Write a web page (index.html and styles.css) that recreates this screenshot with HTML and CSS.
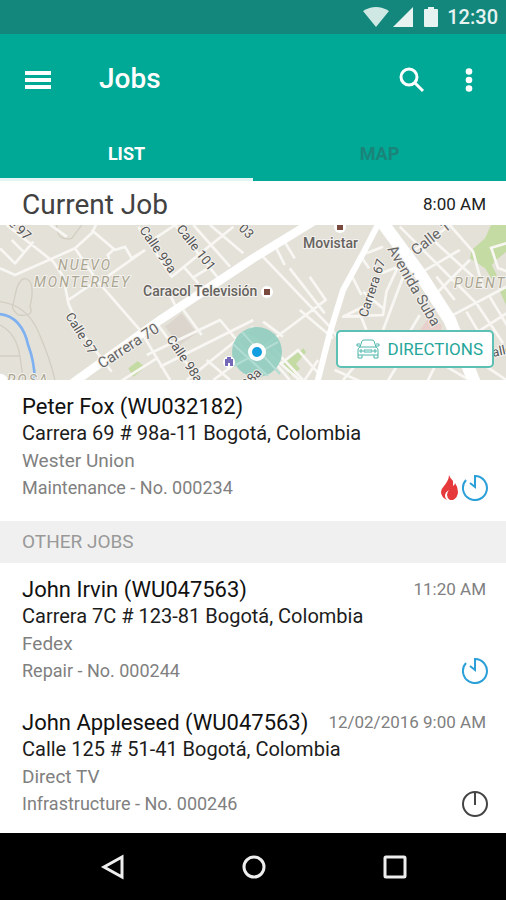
FILE: index.html
```html
<!DOCTYPE html>
<html lang="en">
<head>
    <meta charset="UTF-8">
    <meta name="viewport" content="width=device-width, initial-scale=1.0">
    <title>Jobs</title>
    <link rel="stylesheet" href="styles.css">
</head>
<body>
<div class="status-bar">
    <svg width="26" height="20" viewBox="0 0 26 20" aria-hidden="true"><path class="wifi" d="M0 4Q13-4 26 4L13 20z"/></svg>
    <svg width="20" height="20" viewBox="0 0 20 20" aria-hidden="true"><path d="M20 0v20H0z"/></svg>
    <svg class="battery" width="14" height="20" viewBox="0 0 14 20" aria-hidden="true"><path d="M4 0h6v2h3q1 0 1 1v16q0 1-1 1H1q-1 0-1-1V3q0-1 1-1h3z"/></svg>
    <span>12:30</span>
</div>

<header class="header">
    <div class="app-bar">
        <button type="button" class="icon-button" aria-label="Menu">
            <svg width="28" height="20" viewBox="0 0 28 20"><path d="M1 1h26v4H1zM1 8h26v4H1zM1 15h26v4H1z"/></svg>
        </button>
        <h1>Jobs</h1>
        <button type="button" class="icon-button" aria-label="Search">
            <svg width="26" height="26" viewBox="0 0 26 26"><circle class="line" cx="10" cy="10" r="8"/><path class="line" d="M15 15l9 9"/></svg>
        </button>
        <button type="button" class="icon-button" aria-label="More options">
            <svg width="8" height="26" viewBox="0 0 8 26"><circle cx="4" cy="4.500" r="3.300"/><circle cx="4" cy="13" r="3.300"/><circle cx="4" cy="21.500" r="3.300"/></svg>
        </button>
    </div>
    <nav class="tabs">
        <a href="#list" class="tab active">LIST</a>
        <a href="#map" class="tab">MAP</a>
    </nav>
</header>

<main id="list">
    <div class="current-heading">
        <h2>Current Job</h2>
        <time>8:00 AM</time>
    </div>

    <div class="map" id="map">
        <svg class="map-canvas" viewBox="0 0 506 155" preserveAspectRatio="xMidYMid slice">
            <g transform="translate(0 -5) scale(.3334)">
                <!-- parks and blocks -->
                <path class="park" d="M385 445l28-22 22 18-35 30zM850 430l60-45 8 12-30 35 12 15-30 20zM1475 10h50v80l-30 25-20 20 15 30-10 20-25-40-45-30 5-25 40-35zM1500 215l20-15v60z"/>
                <path class="block" d="M495 320l50-40 45 60-50 35z"/>
                <path class="block-pink" d="M1260 330l25-35 40 20-5 30z"/>
                <path class="contour" d="M0 245q80 10 115 90t50 145M0 315q50 25 60 95t10 80M50 205q15-40 35-25t5 80q15 30-35 25-25-20-15-35zM0 408h60M170 15q0 50 45 40l30-40"/>
                <path class="river" d="M-5 282q70 5 90 95 18 45 20 110"/>

                <!-- side streets, west -->
                <path class="street" d="M20 15l140 110 30 45 15 80 35 80 95 125M0 85l45 45 55-65M0 145l45 20 180-80 50-45 15-30M145 10l55 40M35 60l35 35M225 85l65 95 130 150 60 100 30 50M275 30l70 60 30-10 20 35 40-25M345 85l-22 20 5 12M310 178l125-88M205 240l85-58M415 20l100 150 185-150M525 15l130 160M580 15l110 125M630 15l100 85M465 55l60-40M550 140l45 50M575 175l65-40M510 225l20 40M550 270l55 75M440 405l220-105 100 120M480 440l280-140M470 310l135 180M360 485l110-70M560 480l200-160M690 480l-70-60M640 480l120-90"/>
                <!-- side streets, east -->
                <path class="street" transform="translate(759 0)" d="M20 100l210 220 30 40M60 65l35 70M85 50l40 65M110 145l105 135M170 170l48 70-200 150M-20 340l170 150M90 350l-60-45M140 270l100 85M60 385l90 95M85 430l50-40 70 80M0 350l110 130M155 480l40-60M320 105l28 40M295 165l30 60M340 100l50-20M385 160l50-20-35 75-10 70-120 5 90-45M330 215l60 50M320 280l20 50M490 210l-40-40-60 160M500 285l-30 50M440 20l160 160 70 70M470 100l130-90M540 60l120 110M590 15l70 80 30 110M500 160l120-70M540 230l110-110M590 290l180-95M605 240l-55-70M640 275l60 100M670 250l80 120M710 230l60 100M710 85l50-15M715 85l20 60 30 10M620 370l140-90M245 450l90 40M270 480l50-60M400 490l30-50M520 490l30-60M580 440l60 35M700 440l60 40"/>

                <!-- main avenues -->
                <path class="avenue" d="M210 495l270-195 279-185 180-110"/>
                <path class="avenue narrow" d="M1138 5l-49 95-60 110-40 130-38 150"/>
                <path class="avenue wide" d="M1145 5l114 155 90 140 75 190"/>
                <circle class="avenue-dot" cx="0" cy="485" r="24"/>
            </g>

            <circle class="range" cx="257" cy="127" r="25"/>
            <path class="range-street" d="M233 119l35 32M242 107l38 42M234 141l44-24"/>
            <circle class="pin-halo" cx="257" cy="127" r="9"/>
            <circle class="pin" cx="257" cy="127" r="5"/>
            <circle class="pin-halo" cx="229" cy="137" r="6"/>
            <path class="poi-hotel" d="M225 141v-7h2v-2h4v2h2v7h-3v-3h-2v3z"/>
            <circle class="pin-halo" cx="267" cy="67" r="6"/>
            <path class="poi" d="M264 64h6v6h-6z"/>
            <circle class="pin-halo" cx="340" cy="2" r="6"/>
            <path class="poi" d="M337 0h6v5h-6z"/>

            <g class="labels">
                <text transform="translate(3 -5) rotate(42)">lle 97</text>
                <text transform="translate(139 5) rotate(55)">Calle 99a</text>
                <text transform="translate(176 4) rotate(52)">Calle 101</text>
                <text transform="translate(238 4) rotate(45)">03</text>
                <text transform="translate(65 91) rotate(58)">Calle 97</text>
                <text transform="translate(166 114) rotate(56)">Calle 98a</text>
                <text transform="translate(367 93) rotate(-72)">Carrera 67</text>
                <text transform="translate(247 164) rotate(-45)">98a</text>
                <text transform="translate(493 132) rotate(-12)">alle</text>
            </g>
            <g class="labels large">
                <text transform="translate(102 144) rotate(-33)">Carrera 70</text>
                <text transform="translate(387 24) rotate(60)">Avenida Suba</text>
                <text transform="translate(416 31) rotate(-38)">Calle 1</text>
            </g>
            <g class="labels place">
                <text x="143" y="71">Caracol Televisión</text>
                <text x="303" y="23">Movistar</text>
            </g>
            <g class="labels district">
                <text x="58" y="45">NUEVO</text>
                <text x="34" y="62">MONTERREY</text>
                <text x="454" y="63">PUENTE</text>
                <text x="7" y="160">ROSA</text>
            </g>
        </svg>
        <button type="button" class="directions">
            <svg width="24" height="20" viewBox="0 0 24 20" aria-hidden="true"><path d="M4 8l2-6q.5-1 2-1h8q1.500 0 2 1l2 6M4 8h16q2 1 2 3v5H2v-5q0-2 2-3zM4 7H1v-2h3M20 7h3v-2h-3M2 16v3h4v-3M18 16v3h4v-3M8 11h8v2H8zM4 11h2v2H4zM18 11h2v2h-2z"/></svg>
            DIRECTIONS
        </button>
    </div>

    <article class="job current">
        <h3>Peter Fox (WU032182)</h3>
        <p class="address">Carrera 69 # 98a-11 Bogotá, Colombia</p>
        <p class="client">Wester Union</p>
        <p class="work">Maintenance - No. 000234</p>
        <div class="flags">
            <svg width="17" height="25" viewBox="0 0 17 25" role="img" aria-label="Urgent"><path class="flame" d="M8 0q1 3 4 6 0 3 0 5 2-1 2-3 3 4 3 9 0 5-5 8H9q-3-2-3-5 0-3 2-5-4 2-4 6 0 2 2 4-6-3-6-8 0-3 3-6Q8 5 8 0z"/></svg>
            <svg class="clock started" width="26" height="26" viewBox="0 0 26 26" role="img" aria-label="In progress"><path d="M4 5a12 12 0 1 0 9-4v11l-5-4"/></svg>
        </div>
    </article>

    <h2 class="section-title">OTHER JOBS</h2>

    <article class="job">
        <h3>John Irvin (WU047563)</h3>
        <time>11:20 AM</time>
        <p class="address">Carrera 7C # 123-81 Bogotá, Colombia</p>
        <p class="client">Fedex</p>
        <p class="work">Repair - No. 000244</p>
        <div class="flags">
            <svg class="clock started" width="26" height="26" viewBox="0 0 26 26" role="img" aria-label="In progress"><path d="M4 5a12 12 0 1 0 9-4v11l-5-4"/></svg>
        </div>
    </article>

    <article class="job">
        <h3>John Appleseed (WU047563)</h3>
        <time>12/02/2016 9:00 AM</time>
        <p class="address">Calle 125 # 51-41 Bogotá, Colombia</p>
        <p class="client">Direct TV</p>
        <p class="work">Infrastructure - No. 000246</p>
        <div class="flags">
            <svg class="clock" width="26" height="26" viewBox="0 0 26 26" role="img" aria-label="Not started"><circle cx="13" cy="13" r="12"/><path d="M13 1v13"/></svg>
        </div>
    </article>
</main>

<footer class="nav-bar">
    <button type="button" class="icon-button" aria-label="Back">
        <svg width="26" height="26" viewBox="0 0 26 26"><path d="M22 3v20L4 13z"/></svg>
    </button>
    <button type="button" class="icon-button" aria-label="Home">
        <svg width="26" height="26" viewBox="0 0 26 26"><circle cx="13" cy="13" r="10"/></svg>
    </button>
    <button type="button" class="icon-button" aria-label="Recent apps">
        <svg width="26" height="26" viewBox="0 0 26 26"><rect x="3" y="3" width="20" height="20" rx="1"/></svg>
    </button>
</footer>
</body>
</html>
```
FILE: styles.css
```css
/* General page styling */
* {
    box-sizing: border-box;
}

body {
    font-family: Roboto, sans-serif;
    margin: 0;
    min-height: 100vh;
    display: flex;
    flex-direction: column;
    background-color: white;
    color: #212121;
}

h1, h2, h3, p {
    margin: 0;
    font-weight: normal;
}

svg {
    display: block;
}

.icon-button {
    display: flex;
    padding: 0;
    border: none;
    background: none;
    cursor: pointer;
}

/* Status bar */
.status-bar {
    display: flex;
    align-items: center;
    justify-content: flex-end;
    gap: 4px;
    height: 34px;
    padding: 0 8px;
    background-color: #14877d;
    color: #e6f3f1;
    font-size: 20px;
    font-weight: 500;
}

.status-bar svg {
    fill: #e6f3f1;
}

.status-bar .wifi {
    fill: #cfe8e4;
}

.status-bar .battery {
    margin: 0 5px 0 7px;
}

/* Header */
.header {
    background-color: #00a896;
    color: white;
}

.app-bar {
    display: flex;
    align-items: center;
    height: 92px;
    padding: 0 33px 0 24px;
}

.app-bar svg {
    fill: white;
}

.app-bar .line {
    fill: none;
    stroke: white;
    stroke-width: 3;
}

.app-bar .icon-button + .icon-button {
    margin-left: 40px;
}

h1 {
    flex: 1;
    margin-left: 47px;
    padding-bottom: 4px;
    font-size: 28px;
    font-weight: 500;
}

.tabs {
    display: flex;
}

.tab {
    flex: 1;
    height: 55px;
    border-bottom: 3px solid transparent;
    color: #1a8479;
    font-size: 18px;
    font-weight: 700;
    line-height: 56px;
    text-align: center;
    text-decoration: none;
}

.tab.active {
    border-bottom-color: #e3f5f3;
    color: white;
}

/* Current job */
main {
    flex: 1;
}

.current-heading {
    display: flex;
    align-items: center;
    justify-content: space-between;
    height: 44px;
    padding: 2px 20px 0 22px;
}

.current-heading h2 {
    color: #424242;
    font-size: 28px;
}

time {
    font-size: 17px;
}

/* Map */
.map {
    position: relative;
    height: 155px;
    background-color: #e4e1d9;
}

.map-canvas {
    width: 100%;
    height: 100%;
}

.park {
    fill: #c5dba4;
}

.block {
    fill: #dcd5cd;
}

.block-pink {
    fill: #e8cfcb;
}

.contour {
    fill: none;
    stroke: #d3cec2;
    stroke-width: 4;
}

.river {
    fill: none;
    stroke: #7fb0f0;
    stroke-width: 8;
}

.street {
    fill: none;
    stroke: #f8f7f3;
    stroke-width: 8;
    stroke-linejoin: round;
}

.avenue {
    fill: none;
    stroke: white;
    stroke-width: 26;
}

.avenue.narrow {
    stroke-width: 18;
}

.avenue.wide {
    stroke-width: 38;
}

.avenue-dot, .pin-halo {
    fill: white;
}

.range {
    fill: #8fcdbf;
    fill-opacity: 0.9;
}

.range-street {
    fill: none;
    stroke: #b2ddd4;
    stroke-width: 2;
}

.pin {
    fill: #109ee0;
}

.poi {
    fill: #7a4a3e;
}

.poi-hotel {
    fill: #7468b8;
}

.labels {
    fill: #555;
    font-size: 13px;
    stroke: #f4f2ee;
    stroke-width: 2;
    paint-order: stroke;
}

.labels.large {
    font-size: 15px;
    fill: #666;
}

.labels.place {
    fill: #66625e;
    font-size: 14px;
    font-weight: 500;
}

.labels.district {
    fill: #aaa591;
    font-size: 14px;
    font-style: italic;
    letter-spacing: 2px;
}

.directions {
    position: absolute;
    right: 12px;
    bottom: 12px;
    display: flex;
    align-items: center;
    gap: 8px;
    height: 38px;
    padding: 0 9px 0 18px;
    border: 2px solid #5cc0b4;
    border-radius: 5px;
    background-color: white;
    color: #26a69a;
    font-family: inherit;
    font-size: 17px;
    cursor: pointer;
}

.directions svg {
    fill: none;
    stroke: #4db6ab;
}

/* Job rows */
.job {
    display: grid;
    grid-template-columns: 1fr auto;
    grid-template-rows: 26px 28px 27px 27px;
    align-items: center;
    padding: 13px 20px 12px 22px;
    color: #808080;
    font-size: 18px;
}

.job.current {
    padding-bottom: 20px;
}

.job h3 {
    color: #111;
    font-size: 22px;
}

.job .address, .job .client {
    grid-column: 1 / -1;
}

.job .address {
    color: #1c1c1c;
    font-size: 20px;
}

.job .client {
    font-size: 19px;
}

.flags {
    display: flex;
    align-items: center;
    justify-content: flex-end;
    gap: 4px;
    margin-right: -2px;
}

.flame {
    fill: #e5393c;
}

.clock {
    fill: none;
    stroke: #444;
    stroke-width: 2;
}

.clock.started {
    stroke: #2a9fd8;
}

.section-title {
    height: 42px;
    padding: 0 22px;
    background-color: #f0f0f0;
    color: #999;
    font-size: 19px;
    line-height: 42px;
}

/* Bottom navigation */
.nav-bar {
    display: flex;
    align-items: center;
    justify-content: space-between;
    height: 67px;
    padding: 0 98px 0 100px;
    background-color: black;
}

.nav-bar svg {
    fill: none;
    stroke: #eee;
    stroke-width: 3;
}
```
